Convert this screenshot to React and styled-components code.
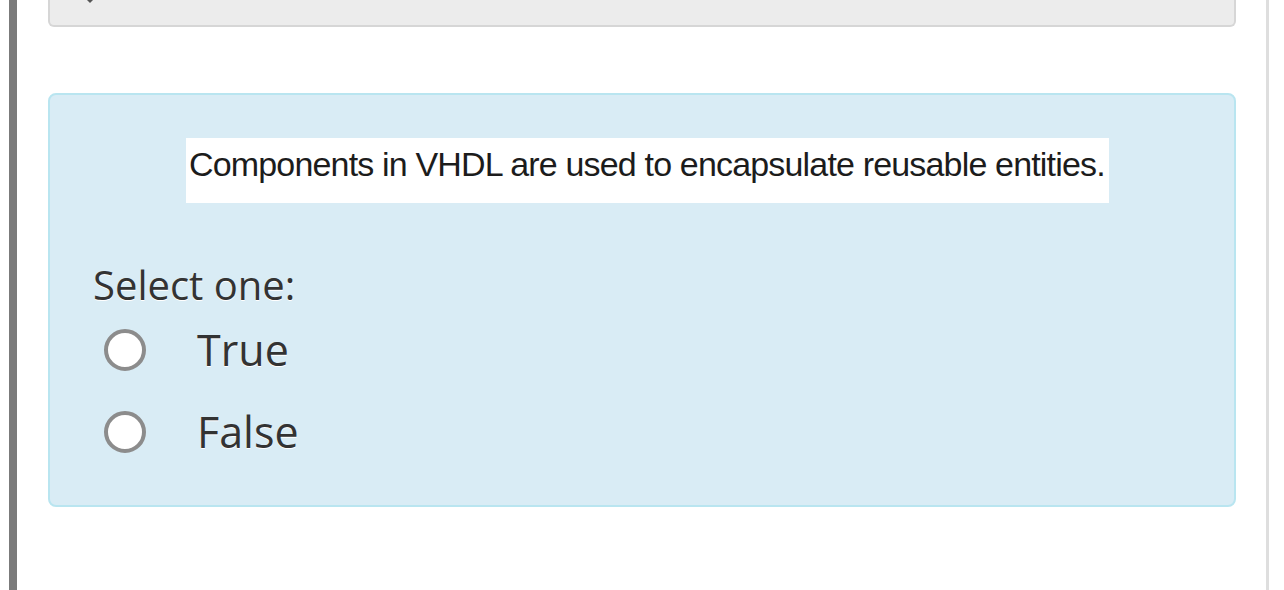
import React from "react";
import styled, { createGlobalStyle } from "styled-components";

const GlobalStyle = createGlobalStyle`
  html, body {
    margin: 0;
    padding: 0;
    background: #ffffff;
  }
  body {
    font-family: "Open Sans", "DejaVu Sans", sans-serif;
    color: #333333;
  }
`;

const Page = styled.div`
  display: flex;
  width: 1284px;
  height: 590px;
  overflow: hidden;
  padding-left: 9px;
  box-sizing: border-box;
`;

const SideBar = styled.div`
  width: 8px;
  flex-shrink: 0;
  background: #7b7b7b;
`;

const Content = styled.div`
  width: 1188px;
  flex-shrink: 0;
  margin-left: 31px;
  display: flex;
  flex-direction: column;
`;

const Divider = styled.div`
  width: 3px;
  flex-shrink: 0;
  margin-left: 30px;
  background: #dedede;
`;

const Well = styled.div`
  height: 25px;
  background: #ececec;
  border: 2px solid #d6d6d6;
  border-top: none;
  border-radius: 0 0 6px 6px;
  padding-left: 37px;
`;

const Formulation = styled.div`
  margin-top: 66px;
  background: #d9ecf5;
  border: 2px solid #b9e5f0;
  border-radius: 8px;
  padding: 43px 0 32px 43px;
`;

const PromptRow = styled.div`
  display: flex;
`;

const Prompt = styled.div`
  margin-left: 93px;
  background: #ffffff;
  height: 58px;
  padding: 7px 4px 0 3px;
  font-family: "Liberation Sans", Arial, sans-serif;
  font-size: 34px;
  line-height: 38px;
  letter-spacing: -0.83px;
  color: #1c1c1c;
  white-space: nowrap;
`;

const Label = styled.div`
  margin-top: 58px;
  font-size: 40px;
  line-height: 47px;
  text-shadow: 0 1px 0 #ffffff;
  color: #333333;
`;

const Options = styled.div`
  display: flex;
  flex-direction: column;
  margin-top: 1px;
  padding-left: 11px;
`;

const Option = styled.label`
  display: flex;
  align-items: center;
  height: 82px;
`;

const Radio = styled.span`
  width: 34px;
  height: 34px;
  border: 4px solid #8c8c8c;
  border-radius: 50%;
  background: #ffffff;
  flex-shrink: 0;
`;

const OptionText = styled.span`
  margin-left: 51px;
  font-size: 43px;
  line-height: 56px;
  text-shadow: 0 1px 0 #ffffff;
  color: #333333;
`;

const options = ["True", "False"];

export default function App() {
  return (
    <>
      <GlobalStyle />
      <Page>
        <SideBar />
        <Content>
          <Well>
            <svg width="6" height="4" viewBox="0 0 6 4" style={{ display: "block" }}>
              <path d="M0 0 L6 0 L3 3 Z" fill="#555" />
            </svg>
          </Well>
          <Formulation>
            <PromptRow>
              <Prompt>Components in VHDL are used to encapsulate reusable entities.</Prompt>
            </PromptRow>
            <Label>Select one:</Label>
            <Options>
              {options.map((o) => (
                <Option key={o}>
                  <Radio />
                  <OptionText>{o}</OptionText>
                </Option>
              ))}
            </Options>
          </Formulation>
        </Content>
        <Divider />
      </Page>
    </>
  );
}
